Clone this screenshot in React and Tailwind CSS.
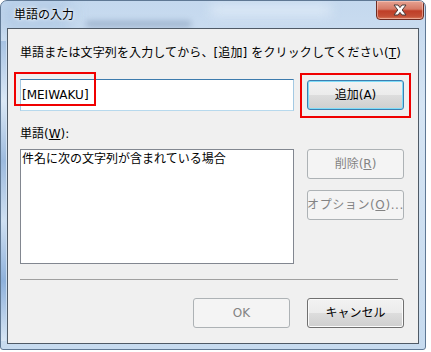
import React from "react";

const FONT = {
  fontFamily: '"DejaVu Sans", "Noto Sans CJK JP", sans-serif',
};

function VistaButton({ children, variant = "normal", className = "" }) {
  const base =
    "h-[30px] w-[97px] shrink-0 rounded-[3px] border flex items-center justify-center text-[12px] leading-[16px] whitespace-nowrap overflow-hidden";
  let v = "";
  if (variant === "normal") {
    v =
      "border-[#707070] text-black bg-[linear-gradient(to_bottom,#f2f2f2_0%,#ebebeb_50%,#dddddd_50%,#cfcfcf_100%)] shadow-[inset_0_0_0_1px_#fbfbfb]";
  } else if (variant === "default") {
    v =
      "border-[#3c7fb1] text-black bg-[linear-gradient(to_bottom,#f2f2f2_0%,#ebebeb_50%,#dddddd_50%,#cfcfcf_100%)] shadow-[inset_0_0_0_1px_#7fdcf8]";
  } else {
    v = "border-[#adb2b5] text-[#838383] bg-[#f4f4f4]";
  }
  return <div className={`${base} ${v} ${className}`}>{children}</div>;
}

export default function App() {
  return (
    <div className="relative w-[431px] h-[352px] bg-white overflow-hidden" style={FONT}>
      {/* window */}
      <div className="relative w-[426px] h-[350px] rounded-t-[7px] rounded-b-[3px] border border-[#5f7894] bg-[linear-gradient(to_bottom,#c4d8ee_0%,#d6e5f4_30%,#cfe0f1_60%,#c7dbef_100%)] flex flex-col px-[6px] pb-[5px] overflow-hidden">
        {/* blurred background shapes seen through glass */}
        <div className="absolute left-0 top-0 w-[70px] h-[30px] bg-[#aac5e2] blur-[8px] opacity-70" />
        <div className="absolute left-[85px] top-[20px] w-[105px] h-[6px] bg-[#7d95b3] blur-[3px] opacity-60" />
        <div className="absolute left-[210px] top-[4px] w-[120px] h-[10px] bg-[#e6f0fa] blur-[6px] opacity-80" />
        <div className="absolute left-0 top-[40px] w-[5px] h-[300px] bg-[linear-gradient(to_bottom,#9fbde0,#dce9f6,#8fb0d8,#cfe0f2,#7fa6d6,#dbe8f5)] opacity-80" />

        {/* title bar */}
        <div className="relative h-[27px] flex items-center pl-[7px] pt-[1px]">
          <span className="text-[12px] leading-[16px] text-black [text-shadow:0_0_6px_#ffffff,0_0_3px_#ffffff]">
            単語の入力
          </span>
        </div>

        {/* close button */}
        <div className="absolute right-[1px] top-[-1px] w-[48px] h-[20px] rounded-b-[4px] border border-[#6e2c22] bg-[linear-gradient(to_bottom,#e6a292_0%,#d67a66_45%,#bf3e27_55%,#c44f36_85%,#dc7d5c_100%)] shadow-[inset_0_0_0_1px_rgba(255,215,205,0.5)] flex items-center justify-center">
          <svg width="14" height="12" viewBox="0 0 14 12">
            <path
              d="M1 1 H5 L7 3.6 L9 1 H13 L9.2 6 L13 11 H9 L7 8.4 L5 11 H1 L4.8 6 Z"
              fill="#ffffff"
              stroke="#4a3a38"
              strokeWidth="1"
              strokeLinejoin="round"
            />
          </svg>
        </div>

        {/* client area */}
        <div className="relative flex-1 border border-[#4f5a66] bg-[#f0f0f0] flex flex-col pl-[12px] pr-[14px] pt-[16px]">
          <div className="h-[16px] text-[12px] leading-[16px] text-black whitespace-nowrap tracking-[0.12px]">
            単語または文字列を入力してから、[追加] をクリックしてください(<span className="underline">T</span>)
          </div>

          <div className="mt-[18px] h-[32px] flex items-center gap-[13px]">
            <div className="h-[32px] w-[274px] bg-white border border-[#a4c9e3] border-t-[#3d7bad] border-b-[#b7d9ed] flex items-center pl-[1px] text-[12px] leading-[16px] text-black">
              [MEIWAKU]
            </div>
            <VistaButton variant="default">追加(A)</VistaButton>
          </div>

          <div className="mt-[15px] h-[16px] text-[12px] leading-[16px] text-black">
            単語(<span className="underline">W</span>):
          </div>

          <div className="mt-[7px] flex gap-[13px]">
            <div className="h-[115px] w-[274px] bg-white border border-[#828790] pl-[1px] pt-[1px] text-[12px] leading-[16px] text-black">
              件名に次の文字列が含まれている場合
            </div>
            <div className="flex flex-col gap-[11px]">
              <VistaButton variant="disabled">
                削除(<span className="underline">R</span>)
              </VistaButton>
              <VistaButton variant="disabled" className="tracking-[0.6px]">
                オプション(<span className="underline">O</span>)...
              </VistaButton>
            </div>
          </div>

          <div className="mt-[15px] h-[1px] w-[378px] bg-[#a0a0a0]" />

          <div className="mt-[18px] flex justify-end gap-[17px]">
            <VistaButton variant="disabled">OK</VistaButton>
            <VistaButton variant="normal">キャンセル</VistaButton>
          </div>
        </div>
      </div>

      {/* red annotation boxes */}
      <div className="absolute left-[14px] top-[72px] w-[82px] h-[34px] border-[2px] border-[#f00000]" />
      <div className="absolute left-[300px] top-[73px] w-[111px] h-[45px] border-[2px] border-[#f00000]" />
    </div>
  );
}
